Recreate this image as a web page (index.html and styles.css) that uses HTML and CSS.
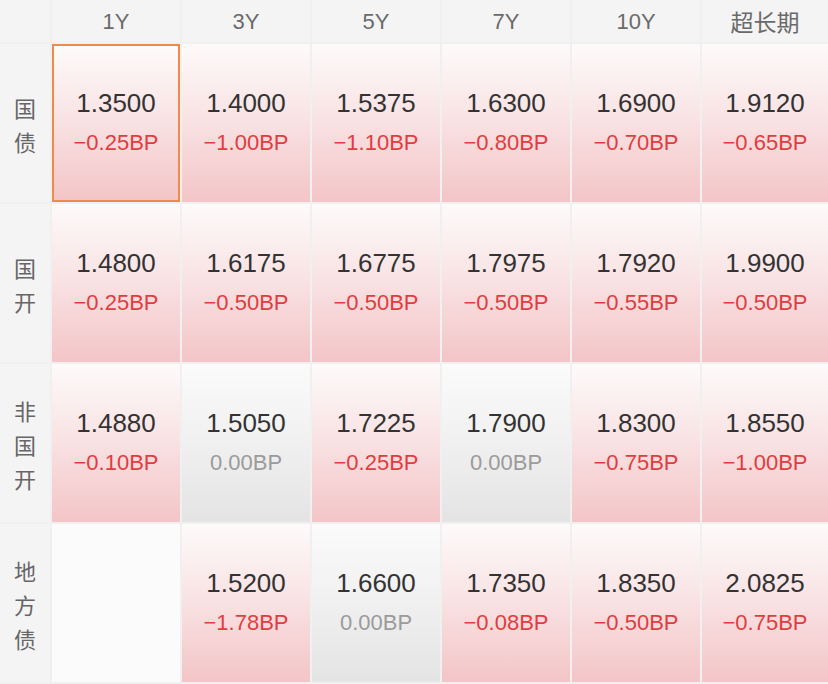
FILE: index.html
```html
<!DOCTYPE html>
<html lang="zh">
<head>
<meta charset="utf-8">
<link rel="stylesheet" href="styles.css">
</head>
<body>
<div class="grid">
  <div class="hd corner"></div>
  <div class="hd">1Y</div>
  <div class="hd">3Y</div>
  <div class="hd">5Y</div>
  <div class="hd">7Y</div>
  <div class="hd">10Y</div>
  <div class="hd cjk">超长期</div>

  <div class="lbl"><span>国</span><span>债</span></div>
  <div class="cell down selected"><div class="val">1.3500</div><div class="bp">−0.25BP</div></div>
  <div class="cell down"><div class="val">1.4000</div><div class="bp">−1.00BP</div></div>
  <div class="cell down"><div class="val">1.5375</div><div class="bp">−1.10BP</div></div>
  <div class="cell down"><div class="val">1.6300</div><div class="bp">−0.80BP</div></div>
  <div class="cell down"><div class="val">1.6900</div><div class="bp">−0.70BP</div></div>
  <div class="cell down"><div class="val">1.9120</div><div class="bp">−0.65BP</div></div>

  <div class="lbl"><span>国</span><span>开</span></div>
  <div class="cell down"><div class="val">1.4800</div><div class="bp">−0.25BP</div></div>
  <div class="cell down"><div class="val">1.6175</div><div class="bp">−0.50BP</div></div>
  <div class="cell down"><div class="val">1.6775</div><div class="bp">−0.50BP</div></div>
  <div class="cell down"><div class="val">1.7975</div><div class="bp">−0.50BP</div></div>
  <div class="cell down"><div class="val">1.7920</div><div class="bp">−0.55BP</div></div>
  <div class="cell down"><div class="val">1.9900</div><div class="bp">−0.50BP</div></div>

  <div class="lbl"><span>非</span><span>国</span><span>开</span></div>
  <div class="cell down"><div class="val">1.4880</div><div class="bp">−0.10BP</div></div>
  <div class="cell flat"><div class="val">1.5050</div><div class="bp">0.00BP</div></div>
  <div class="cell down"><div class="val">1.7225</div><div class="bp">−0.25BP</div></div>
  <div class="cell flat"><div class="val">1.7900</div><div class="bp">0.00BP</div></div>
  <div class="cell down"><div class="val">1.8300</div><div class="bp">−0.75BP</div></div>
  <div class="cell down"><div class="val">1.8550</div><div class="bp">−1.00BP</div></div>

  <div class="lbl"><span>地</span><span>方</span><span>债</span></div>
  <div class="cell empty"></div>
  <div class="cell down"><div class="val">1.5200</div><div class="bp">−1.78BP</div></div>
  <div class="cell flat"><div class="val">1.6600</div><div class="bp">0.00BP</div></div>
  <div class="cell down"><div class="val">1.7350</div><div class="bp">−0.08BP</div></div>
  <div class="cell down"><div class="val">1.8350</div><div class="bp">−0.50BP</div></div>
  <div class="cell down"><div class="val">2.0825</div><div class="bp">−0.75BP</div></div>
</div>
</body>
</html>
```
FILE: styles.css
```css
html, body {
  margin: 0;
  padding: 0;
  background: #f0f0f0;
}
body {
  width: 828px;
  height: 684px;
  overflow: hidden;
  font-family: "Liberation Sans", "Noto Sans CJK SC", sans-serif;
}
.grid {
  display: grid;
  grid-template-columns: 50px repeat(5, 128px) 1fr;
  grid-template-rows: 42px repeat(4, 158px);
  gap: 2px;
  width: 828px;
}
.hd {
  background: #f4f4f4;
  color: #6a6a6a;
  font-size: 22px;
  display: flex;
  align-items: center;
  justify-content: center;
  padding-top: 1px;
}
.cjk {
  font-family: "Noto Sans CJK SC", sans-serif;
  font-size: 23px;
  padding-top: 0;
}
.lbl {
  background: #f4f4f4;
  color: #666;
  font-family: "Noto Sans CJK SC", sans-serif;
  font-size: 22px;
  line-height: 34px;
  display: flex;
  flex-direction: column;
  align-items: center;
  justify-content: center;
  padding-top: 2px;
}
.cell {
  display: flex;
  flex-direction: column;
  align-items: center;
  justify-content: center;
  box-sizing: border-box;
}
.down {
  background: linear-gradient(to bottom, #fdfafa 0%, #f9e4e5 45%, #f3c5c7 100%);
}
.flat {
  background: linear-gradient(to bottom, #fbfbfb 0%, #f1f1f1 45%, #e4e4e4 100%);
}
.empty {
  background: #fbfbfb;
}
.selected {
  border: 2px solid #f08a4b;
}
.val {
  font-size: 26px;
  line-height: 40px;
  color: #333;
}
.bp {
  font-size: 22px;
  line-height: 40px;
  color: #e23c3f;
}
.flat .bp {
  color: #9b9b9b;
}
```
